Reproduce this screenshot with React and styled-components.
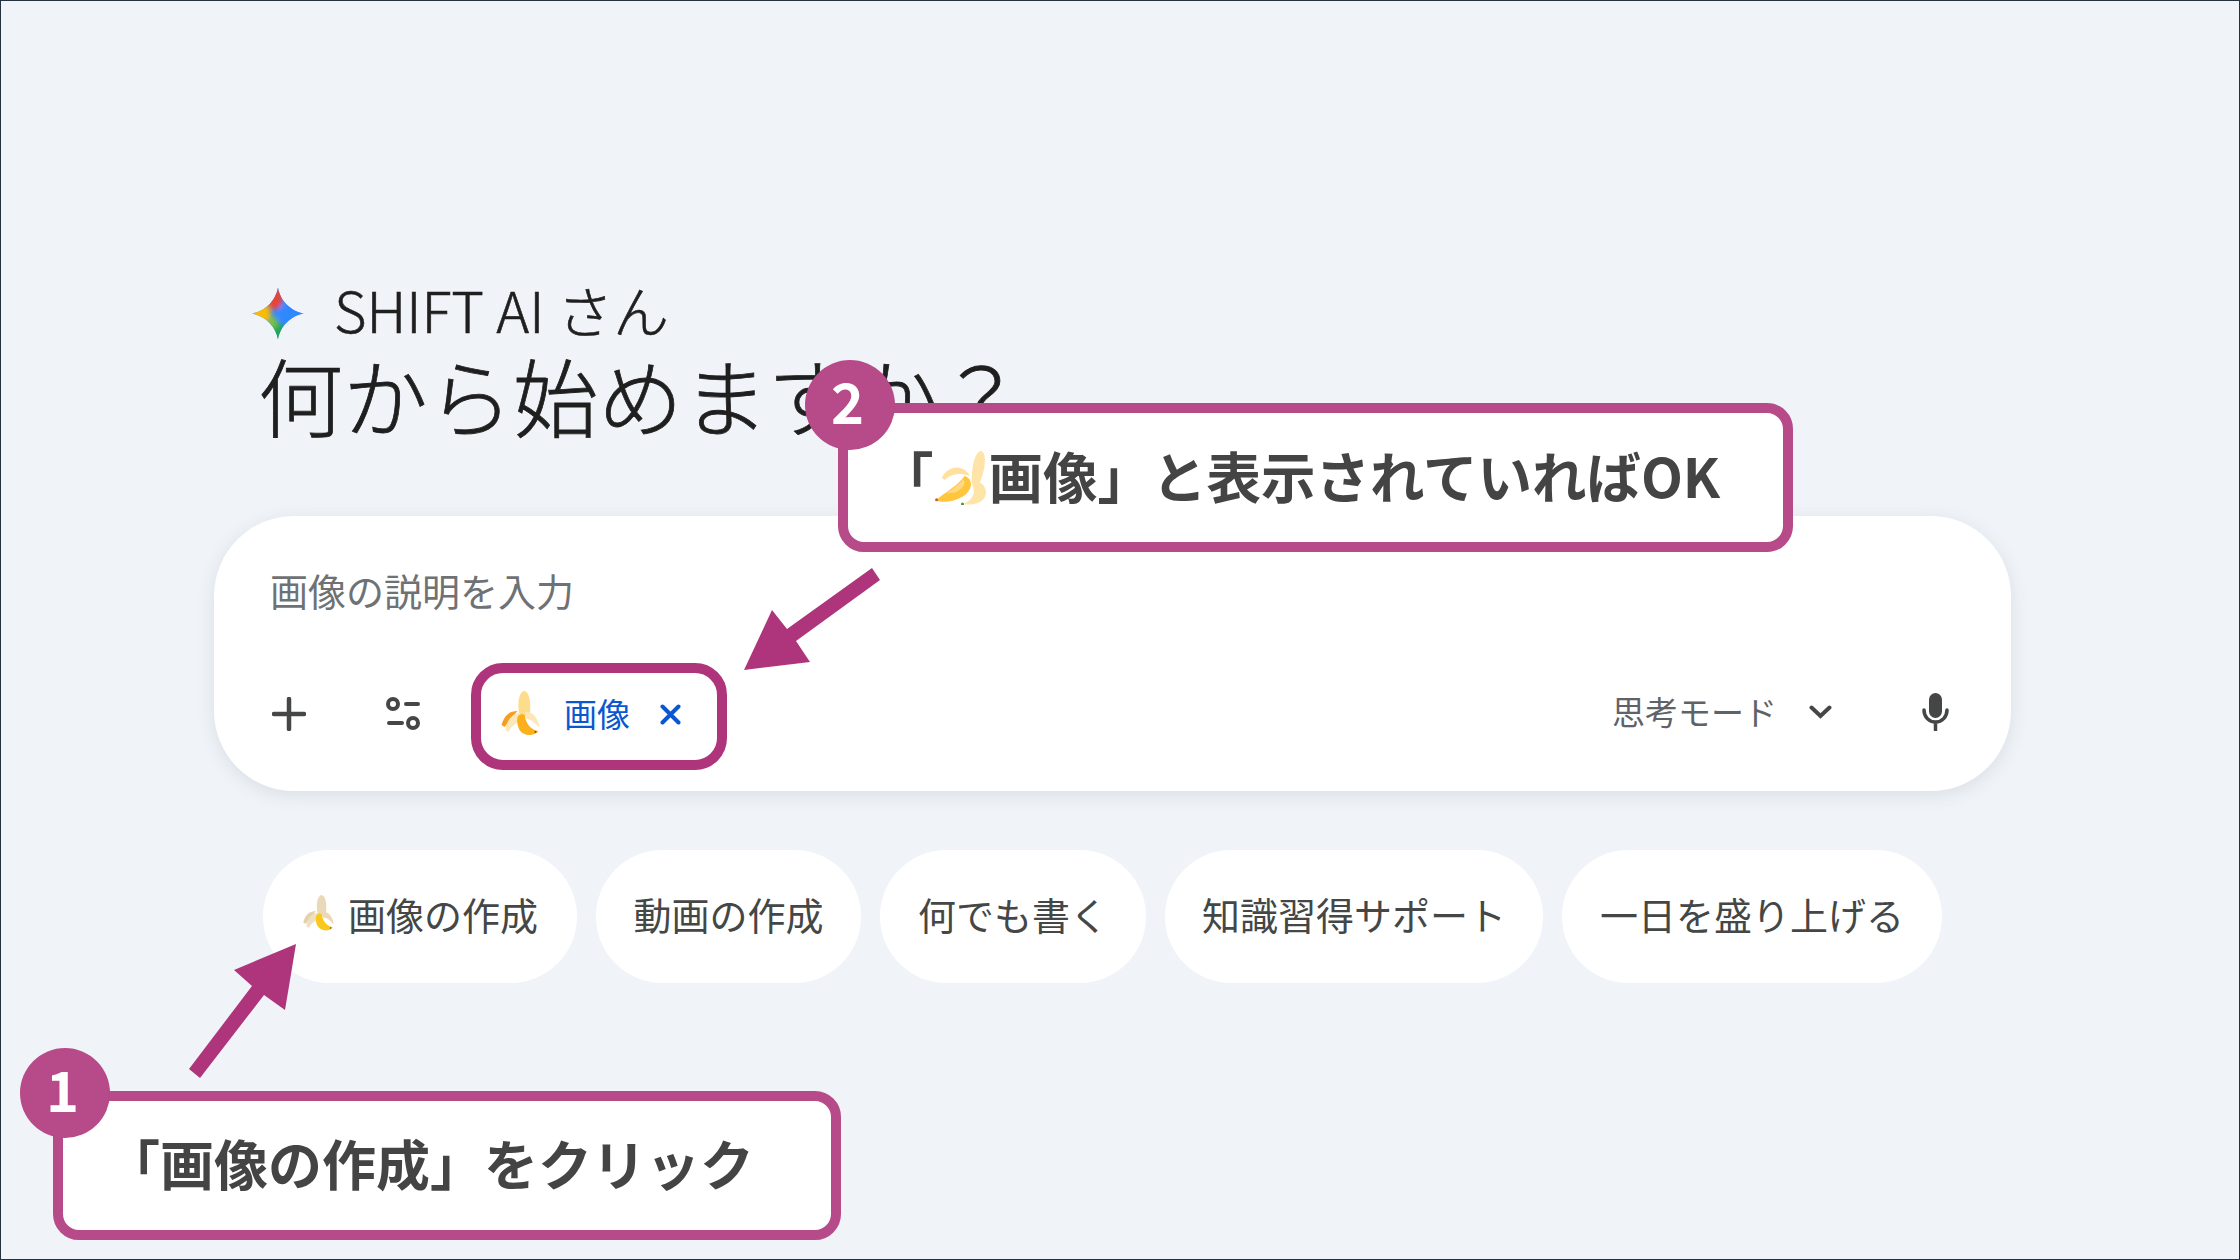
import styled, { createGlobalStyle } from "styled-components";

const GlobalStyle = createGlobalStyle`
    html, body {
        margin: 0;
        padding: 0;
        background: #f0f4f9;
    }
    body {
        font-family: "Noto Sans CJK JP", "Noto Sans", sans-serif;
    }
`

const Page = styled.div`
    position: relative;
    box-sizing: border-box;
    width: 2240px;
    height: 1260px;
    overflow: hidden;
    border: 1px solid #24303c;
    background: #f0f4f9;
    padding: 282px 0 0 213px;
`

const Greeting = styled.div`
    display: flex;
    align-items: center;
    gap: 30px;
    height: 60px;
    padding-left: 38px;
    font-size: 56px;
    line-height: 52px;
    color: #1f1f1f;
    font-weight: 300;
    -webkit-text-stroke: 0.6px #1f1f1f;
`

const GreetingText = styled.span`
    margin-top: -8px;
`

const Heading = styled.h1`
    margin: 6px 0 0 44px;
    height: 96px;
    line-height: 90px;
    font-size: 85px;
    font-weight: 300;
    color: #1f1f1f;
    -webkit-text-stroke: 0.8px #1f1f1f;
`

const Card = styled.div`
    box-sizing: border-box;
    width: 1797px;
    height: 275px;
    margin-top: 71px;
    padding: 48px 62px 0 58px;
    background: #fff;
    border-radius: 80px;
    box-shadow: 0 4px 18px rgba(60, 70, 80, 0.12);
`

const Placeholder = styled.div`
    height: 52px;
    margin-left: -2px;
    line-height: 52px;
    font-size: 38px;
    color: #6f7274;
`

const Toolbar = styled.div`
    display: flex;
    align-items: center;
    height: 60px;
    margin-top: 68px;
`

const ToolIcon = styled.svg`
    flex: none;
    display: block;
    margin-right: ${props => props.gap}px;
`

const Chip = styled.div`
    display: flex;
    align-items: center;
    color: #0b57d0;
    font-size: 33px;
    gap: 24px;
`

const ChipLabel = styled.span`
    margin-top: -2px;
`

const ChipClose = styled.svg`
    display: block;
    margin-left: 6px;
`

const ToolbarRight = styled.div`
    display: flex;
    align-items: center;
    margin: -4px 0 0 auto;
    color: #5f6368;
    font-size: 33px;
`

const ModeLabel = styled.span`
    margin: -2px 32px 0 0;
`

const Chevron = styled.svg`
    display: block;
    margin-right: 90px;
`

const Suggestions = styled.div`
    display: flex;
    gap: 19px;
    margin: 59px 0 0 49px;
`

const Pill = styled.div`
    display: flex;
    align-items: center;
    justify-content: center;
    gap: 13px;
    box-sizing: border-box;
    height: 133px;
    width: ${props => props.width}px;
    padding-bottom: 7px;
    border-radius: 67px;
    background: #fff;
    color: #444746;
    font-size: 38px;
    white-space: nowrap;
`

const ChipFrame = styled.div`
    position: absolute;
    left: 470px;
    top: 662px;
    box-sizing: border-box;
    width: 256px;
    height: 107px;
    border: 10px solid #ae347b;
    border-radius: 32px;
`

const Arrow = styled.svg`
    position: absolute;
    left: 0;
    top: 0;
    pointer-events: none;
`

const Callout = styled.div`
    position: absolute;
    left: ${props => props.left}px;
    top: ${props => props.top}px;
    box-sizing: border-box;
    display: flex;
    align-items: center;
    width: ${props => props.width}px;
    height: 149px;
    padding: 0 0 7px ${props => props.pad}px;
    background: #fff;
    border: 10px solid #b74a88;
    border-radius: 26px;
    color: #444;
    font-size: ${props => props.size}px;
    font-weight: 700;
    white-space: nowrap;
`

const Badge = styled.div`
    position: absolute;
    left: -43px;
    top: -53px;
    width: 90px;
    height: 90px;
    border-radius: 50%;
    background: #b74a88;
    color: #fff;
    font-size: 56px;
    font-weight: 700;
    line-height: 80px;
    text-align: center;
    text-indent: -5px;
`

const InlineBanana = styled.span`
    display: block;
    flex: none;
    width: 55px;
    height: 56px;
    margin-top: 6px;
`

function GeminiStar() {
    return (
        <svg width="52" height="53" viewBox="0 0 52 52" style={{ flex: "none" }}>
            <defs>
                <clipPath id="star">
                    <path d="M26 0C28 13 39 24 52 26C39 28 28 39 26 52C24 39 13 28 0 26C13 24 24 13 26 0Z" />
                </clipPath>
                <filter id="soft" x="-50%" y="-50%" width="200%" height="200%">
                    <feGaussianBlur stdDeviation="2.5" />
                </filter>
            </defs>
            <g clipPath="url(#star)">
                <rect width="52" height="52" fill="#2f88ff" />
                <g filter="url(#soft)">
                    <ellipse cx="22" cy="10" rx="9" ry="12" fill="#ea4335" />
                    <circle cx="37" cy="25" r="10" fill="#2f88ff" />
                    <circle cx="26" cy="46" r="10" fill="#1fa855" />
                    <circle cx="9" cy="26" r="10" fill="#fbbc04" />
                    <circle cx="20" cy="35" r="6" fill="#7cc043" />
                </g>
            </g>
        </svg>
    )
}

function PeeledBanana({ top, left, inner, fruit, side, size, height }) {
    return (
        <svg width={size} height={height} viewBox="42 42 38 46" style={{ display: "block", flex: "none" }}>
            <path d="M60 66C57 54 60 42 65 42C70 43 72 54 70 68Z" fill={top} />
            <path d="M42 76C45 66 50 62 58 62C53 68 49 73 45 78Z" fill={left} />
            <path d="M46 81C47 72 52 65 60 64L62 72C56 74 51 78 49 83Z" fill={inner} />
            <path d="M58 68C62 63 66 65 66 70C68 76 72 81 79 82C74 88 64 87 60 81C58 77 57 72 58 68Z" fill={fruit} />
            <path d="M66 63C73 62 79 69 80 79C76 74 72 70 66 70Z" fill={side} />
            <circle cx="76" cy="83" r="1" fill="#7a4a20" />
        </svg>
    )
}

function PaleBanana() {
    return (
        <svg width="55" height="56" viewBox="34 10 52 54" style={{ display: "block" }}>
            <path d="M70 44C69 28 73 12 79 12C85 14 83 32 76 46Z" fill="#ffe4a8" />
            <path d="M41 38C46 26 62 24 68 36C58 32 48 35 44 40Z" fill="#ffe0a0" />
            <path d="M36 59C46 50 56 46 63 36C72 39 71 50 61 56C52 61 42 62 36 60Z" fill="#ffc53d" />
            <path d="M44 53C52 49 58 44 62 39C65 44 60 49 54 52Z" fill="#ffd97e" />
            <path d="M70 43C78 38 86 48 83 55C81 62 70 65 62 63C72 58 74 52 70 43Z" fill="#ffe4a8" />
            <circle cx="36" cy="59" r="1.5" fill="#b5634a" />
            <circle cx="61" cy="63" r="1.5" fill="#4d9b2d" />
        </svg>
    )
}

const suggestions = [
    { label: "動画の作成", width: 265 },
    { label: "何でも書く", width: 266 },
    { label: "知識習得サポート", width: 378 },
    { label: "一日を盛り上げる", width: 380 },
]

export default function App() {
    return (
        <Page>
            <GlobalStyle />
            <Greeting>
                <GeminiStar />
                <GreetingText>SHIFT AI さん</GreetingText>
            </Greeting>
            <Heading>何から始めますか？</Heading>

            <Card>
                <Placeholder>画像の説明を入力</Placeholder>
                <Toolbar>
                    <ToolIcon gap={80} width="34" height="34" viewBox="0 0 34 34">
                        <path d="M17 2V32M2 17H32" stroke="#444746" strokeWidth="4.5" strokeLinecap="round" fill="none" />
                    </ToolIcon>
                    <ToolIcon gap={81} width="34" height="34" viewBox="0 0 34 34">
                        <g stroke="#444746" strokeWidth="4" fill="none" strokeLinecap="round">
                            <circle cx="7" cy="7" r="5" />
                            <path d="M20 7H32M3 26H16" />
                            <circle cx="27" cy="26" r="5" />
                        </g>
                    </ToolIcon>
                    <Chip>
                        <PeeledBanana size={39} height={46} top="#fddc8c" left="#f59e1f" inner="#fde6b8" fruit="#fbb01c" side="#fde6b8" />
                        <ChipLabel>画像</ChipLabel>
                        <ChipClose width="21" height="21" viewBox="0 0 21 21">
                            <path d="M2.5 2.5L18.5 18.5M18.5 2.5L2.5 18.5" stroke="#0b57d0" strokeWidth="4" strokeLinecap="round" />
                        </ChipClose>
                    </Chip>
                    <ToolbarRight>
                        <ModeLabel>思考モード</ModeLabel>
                        <Chevron width="23" height="14" viewBox="0 0 23 14">
                            <path d="M2.5 2.5L11.5 11L20.5 2.5" stroke="#444746" strokeWidth="4" fill="none" strokeLinecap="round" />
                        </Chevron>
                        <svg width="27" height="38" viewBox="0 0 27 38" style={{ display: "block" }}>
                            <rect x="7" y="0" width="13" height="25" rx="6.5" fill="#444746" />
                            <path d="M2 17C2 24 7 29 13.5 29C20 29 25 24 25 17M13.5 29V37" stroke="#444746" strokeWidth="3.5" fill="none" strokeLinecap="round" />
                        </svg>
                    </ToolbarRight>
                </Toolbar>
            </Card>

            <Suggestions>
                <Pill width={314}>
                    <PeeledBanana size={33} height={37} top="#ead9b8" left="#e6d2a8" inner="#efe0c2" fruit="#f8c81c" side="#ead9b8" />
                    <span>画像の作成</span>
                </Pill>
                {suggestions.map(item => (
                    <Pill key={item.label} width={item.width}>{item.label}</Pill>
                ))}
            </Suggestions>

            <ChipFrame />

            <Arrow width="2240" height="1260" viewBox="0 0 2240 1260">
                <polygon points="295,943 233,969 251,985 188,1068 199,1077 263,994 284,1009" fill="#ae347b" />
                <polygon points="743,669 771,609 786,628 871,567 879,579 795,640 809,661" fill="#ae347b" />
            </Arrow>

            <Callout left={52} top={1090} width={788} size={54} pad={43}>
                <Badge>1</Badge>
                「画像の作成」をクリック
            </Callout>

            <Callout left={837} top={402} width={955} size={54.5} pad={31}>
                <Badge>2</Badge>
                「<InlineBanana><PaleBanana /></InlineBanana>画像」と表示されていればOK
            </Callout>
        </Page>
    )
}
